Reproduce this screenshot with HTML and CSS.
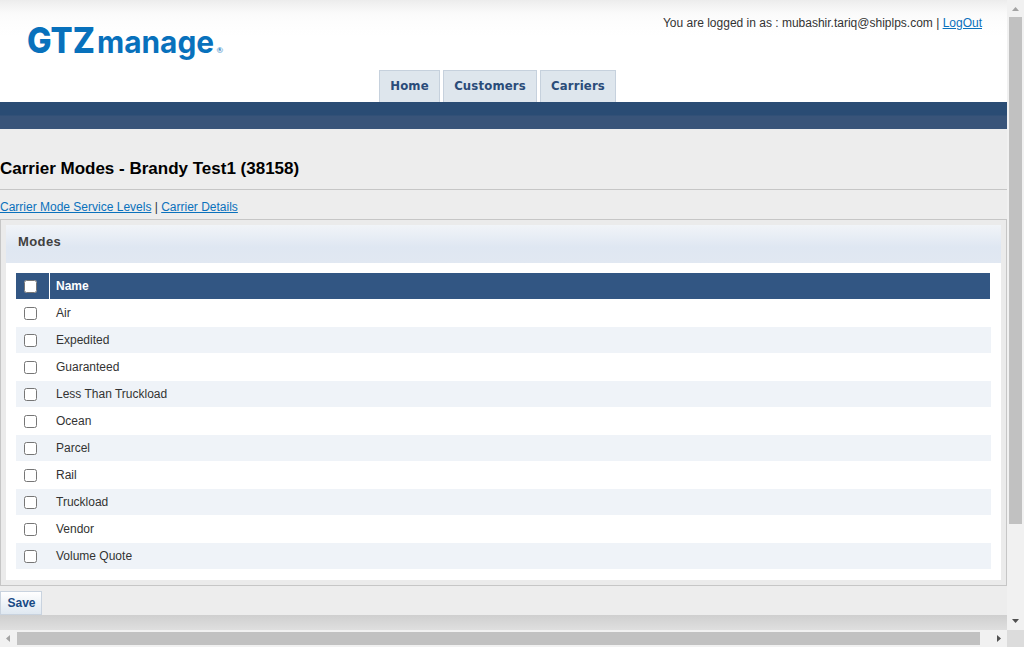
FILE: index.html
```
<!DOCTYPE html>
<html lang="en">
<head>
<meta charset="utf-8">
<title>Carrier Modes</title>
<link rel="stylesheet" href="styles.css">
</head>
<body>
<div class="frame">
  <div class="page">
    <header class="header">
      <div class="topline">
        <svg class="logo" width="200" height="42" viewBox="0 0 200 42" role="img" aria-label="GTZ manage">
          <text class="logo-gtz" x="-1" y="31" textLength="68" lengthAdjust="spacingAndGlyphs">GTZ</text>
          <text class="logo-manage" x="69" y="31" textLength="117" lengthAdjust="spacingAndGlyphs">manage</text>
          <text class="logo-reg" x="188.500" y="31">®</text>
        </svg>
        <div class="login"><span class="who">You are logged in as : mubashir.tariq@shiplps.com |</span> <a href="#">LogOut</a></div>
      </div>
      <nav class="tabs">
        <a class="tab home" href="#">Home</a>
        <a class="tab customers" href="#">Customers</a>
        <a class="tab carriers" href="#">Carriers</a>
      </nav>
    </header>
    <div class="bar"></div>
    <main class="content">
      <h1 class="title">Carrier Modes - Brandy Test1 (38158)</h1>
      <div class="links"><a href="#">Carrier Mode Service Levels</a> | <a href="#">Carrier Details</a></div>
      <section class="panel">
        <h2 class="panel-title">Modes</h2>
        <div class="list">
          <div class="row head"><span class="cell"><input class="check" type="checkbox"></span><span class="name">Name</span></div>
          <div class="row"><span class="cell"><input class="check" type="checkbox"></span><span class="name">Air</span></div>
          <div class="row alt"><span class="cell"><input class="check" type="checkbox"></span><span class="name">Expedited</span></div>
          <div class="row"><span class="cell"><input class="check" type="checkbox"></span><span class="name">Guaranteed</span></div>
          <div class="row alt"><span class="cell"><input class="check" type="checkbox"></span><span class="name">Less Than Truckload</span></div>
          <div class="row"><span class="cell"><input class="check" type="checkbox"></span><span class="name">Ocean</span></div>
          <div class="row alt"><span class="cell"><input class="check" type="checkbox"></span><span class="name">Parcel</span></div>
          <div class="row"><span class="cell"><input class="check" type="checkbox"></span><span class="name">Rail</span></div>
          <div class="row alt"><span class="cell"><input class="check" type="checkbox"></span><span class="name">Truckload</span></div>
          <div class="row"><span class="cell"><input class="check" type="checkbox"></span><span class="name">Vendor</span></div>
          <div class="row alt"><span class="cell"><input class="check" type="checkbox"></span><span class="name">Volume Quote</span></div>
        </div>
      </section>
      <button class="save" type="button">Save</button>
    </main>
    <footer class="footer"></footer>
  </div>
  <div class="vscroll">
    <svg class="arrow" width="17" height="17" viewBox="0 0 17 17"><path fill="#a3a3a3" d="M5 11h7L8.500 7z"/></svg>
    <div class="vthumb"></div>
    <svg class="arrow" width="17" height="17" viewBox="0 0 17 17"><path fill="#505050" d="M5 6h7L8.500 10z"/></svg>
  </div>
  <div class="hscroll">
    <svg class="arrow" width="17" height="17" viewBox="0 0 17 17"><path fill="#a3a3a3" d="M10 5v7L6 8.500z"/></svg>
    <div class="hthumb"></div>
    <svg class="arrow" width="17" height="17" viewBox="0 0 17 17"><path fill="#505050" d="M7 5v7L11 8.500z"/></svg>
  </div>
  <div class="corner"></div>
</div>
</body>
</html>
```
FILE: styles.css
```
* { box-sizing: border-box; }
body { margin: 0; overflow: hidden; font: 12px/14px "Liberation Sans", Arial, sans-serif; color: #333; }
a { color: #0a71bc; }
.frame { display: grid; grid-template: 630px 17px / 1007px 17px; width: 1024px; height: 647px; }
.page { display: flex; flex-direction: column; background: #ededed; overflow: hidden; }
.header { height: 102px; background: linear-gradient(#ececec, #f1f1f1 4px, #fafafa 13px, #fdfdfd 22px, #fff 36px); }
.topline { display: flex; justify-content: space-between; align-items: flex-start; height: 70px; padding: 16px 25px 0 28px; }
.login { white-space: nowrap; }
.logo { margin-top: 6px; overflow: visible; fill: #0871bc; font-family: Inter, sans-serif; }
.logo-gtz { font-size: 35.500px; font-weight: 800; }
.logo-manage { font-size: 31px; font-weight: 700; }
.logo-reg { font-family: Lato, sans-serif; font-size: 8px; }
.tabs { display: flex; gap: 3px; padding-left: 379px; }
.tab { height: 32px; border: 1px solid #c6d1dd; border-bottom: 0; background: #dee6ed; color: #2a4c79; font: bold 13px/29px "DejaVu Sans", Verdana, sans-serif; font-stretch: semi-condensed; letter-spacing: .15px; text-align: center; text-decoration: none; }
.home { width: 61px; }
.customers { width: 94px; }
.carriers { width: 76px; }
.bar { height: 27px; background: linear-gradient(#2a4c74 13px, #395479 14px); }
.content { height: 486px; }
.title { height: 61px; margin: 0; padding-top: 30px; border-bottom: 1px solid #c6c6c6; color: #000; font-size: 17px; line-height: 20px; }
.links { height: 29px; padding-top: 10px; }
.panel { height: 367px; padding: 5px; border: 1px solid #c6c6c6; background: #ebebeb; }
.panel-title { height: 38px; margin: 0; padding: 9px 12px; background: linear-gradient(#f1f4f8, #dfe7f2 22px, #e1e8f2); color: #404040; font-size: 13px; line-height: 15px; letter-spacing: .4px; }
.list { height: 317px; padding: 10px 10px 0; background: #fff; }
.row { display: flex; height: 26px; margin-bottom: 1px; }
.alt { background: #eff3f8; }
.head { margin-right: 1px; background: #325683; color: #fff; font-weight: bold; }
.cell { width: 34px; padding: 7px 0 0 8px; }
.head .cell { border-right: 1px solid #fff; }
.check { display: block; width: 13px; height: 13px; margin: 0; }
.name { padding: 6px 6px 0; }
.save { display: block; width: 42px; height: 24px; margin-top: 5px; padding: 0 0 0 1px; border: 1px solid #c9d3df; background: linear-gradient(#fff, #dfe8f1); color: #194a85; font: bold 12px/22px "Liberation Sans", Arial, sans-serif; }
.footer { height: 15px; background: linear-gradient(#cfcfcf, #dfdfdf); }
.vscroll { display: grid; grid-template-rows: 17px 507px 1fr; height: 630px; background: #f1f1f1; }
.vscroll .arrow:last-child { align-self: end; }
.vthumb { margin: 0 2px; background: #c1c1c1; }
.hscroll { display: flex; background: #f1f1f1; }
.hscroll .arrow:last-child { margin-left: auto; }
.hthumb { width: 963px; margin: 2px 0; background: #c1c1c1; }
.corner { background: #dcdcdc; }
```
